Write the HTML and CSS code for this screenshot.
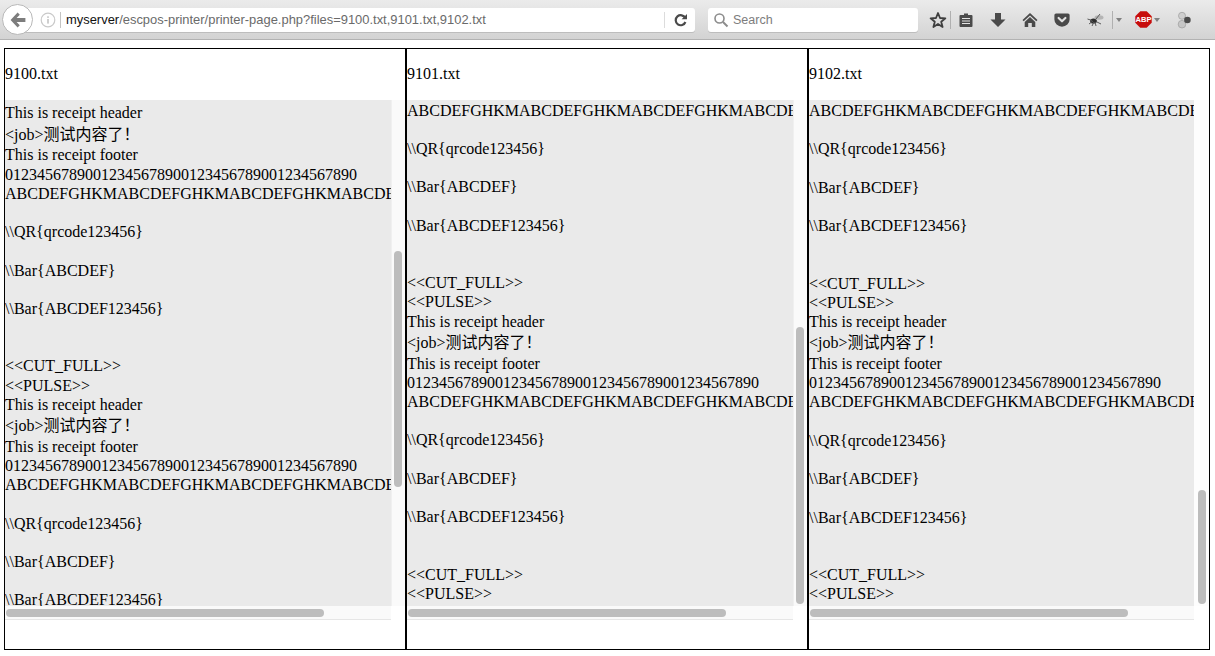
FILE: index.html
```html
<!DOCTYPE html>
<html lang="en">
<head>
<meta charset="utf-8">
<title>printer-page</title>
<link rel="stylesheet" href="styles.css">
</head>
<body>
<header class="toolbar">
  <div class="back"><svg viewBox="0 0 20 20" width="20" height="20"><path d="M9.6 2.6 L2.6 10 L9.6 17.4 L11.8 15.2 L8.6 12 H17.4 V8 H8.6 L11.8 4.8 Z" fill="#7d7d7d"/></svg></div>
  <div class="urlbar">
    <svg class="info" viewBox="0 0 16 16" width="16" height="16"><circle cx="8" cy="8" r="6.8" fill="none" stroke="#c9c9c9" stroke-width="1.2"/><rect x="7.2" y="7" width="1.6" height="4.6" fill="#c4c4c4"/><rect x="7.2" y="4.3" width="1.6" height="1.6" fill="#c4c4c4"/></svg>
    <span class="vsep"></span>
    <span class="url"><b>myserver</b>/escpos-printer/printer-page.php?files=9100.txt,9101.txt,9102.txt</span>
    <span class="vsep right"></span>
    <svg class="reload" viewBox="0 0 14 14" width="14" height="14"><path d="M11.2 5 A5 5 0 1 0 11.4 9" fill="none" stroke="#4a4a4a" stroke-width="2.2"/><path d="M7.6 6.2 H13 V1 Z" fill="#4a4a4a"/></svg>
  </div>
  <div class="search">
    <svg viewBox="0 0 16 16" width="16" height="16"><circle cx="6.5" cy="6.5" r="4.5" fill="none" stroke="#8c8c8c" stroke-width="1.6"/><path d="M10 10 L14.5 14.5" stroke="#8c8c8c" stroke-width="2"/></svg>
    <span>Search</span>
  </div>
  <div class="tools">
    <svg class="t-star" viewBox="0 0 18 18" width="18" height="18"><path d="M9 2 L11 7 L16.4 7.3 L12.2 10.7 L13.6 16 L9 13 L4.4 16 L5.8 10.7 L1.6 7.3 L7 7 Z" fill="none" stroke="#3f3f3f" stroke-width="1.8" stroke-linejoin="round"/></svg>
    <span class="tsep"></span>
    <svg class="t-clip" viewBox="0 0 16 16" width="16" height="16"><path d="M6 1.5 H10 V3 H13.5 A1 1 0 0 1 14.5 4 V14 A1 1 0 0 1 13.5 15 H2.5 A1 1 0 0 1 1.5 14 V4 A1 1 0 0 1 2.5 3 H6 Z" fill="#4a4a4a"/><path d="M4 6.5 H12 M4 9 H12 M4 11.5 H12" stroke="#e2e2e2" stroke-width="1.1"/></svg>
    <svg class="t-down" viewBox="0 0 16 16" width="16" height="16"><path d="M5 1 H11 V7.5 H15.5 L8 15 L0.5 7.5 H5 Z" fill="#4a4a4a"/></svg>
    <svg class="t-home" viewBox="0 0 16 16" width="16" height="16"><path d="M8 1 L15.5 8 L14.3 9.2 L8 3.4 L1.7 9.2 L0.5 8 Z" fill="#4a4a4a"/><path d="M8 5 L13.3 10 V15 H9.8 V11 H6.2 V15 H2.7 V10 Z" fill="#4a4a4a"/></svg>
    <svg class="t-pocket" viewBox="0 0 16 16" width="16" height="16"><path d="M2 1.5 H14 A1.6 1.6 0 0 1 15.6 3.1 V7.5 A7.6 7.2 0 0 1 0.4 7.5 V3.1 A1.6 1.6 0 0 1 2 1.5 Z" fill="#4a4a4a"/><path d="M4.6 6 L8 9.3 L11.4 6" fill="none" stroke="#e2e2e2" stroke-width="2.2" stroke-linecap="round" stroke-linejoin="round"/></svg>
    <svg class="t-bug" viewBox="0 0 20 16" width="20" height="16"><ellipse cx="7.5" cy="9" rx="3.4" ry="2.6" fill="#2e2e2e"/><ellipse cx="13" cy="5.5" rx="4.5" ry="2.2" fill="#b5b5b5"/><path d="M3 12 L7 9 M6 14 L8 10 M10 14 L9 10 M1.5 7 L6 8.5 M11 10 L15 12 M14 2 L10 7" stroke="#5a5a5a" stroke-width="1"/></svg>
    <span class="tsep bugsep"></span>
    <span class="caret c1"></span>
    <svg class="t-abp" viewBox="0 0 18 18" width="17" height="17"><path d="M5.6 0.3 H12.4 L17.7 5.6 V12.4 L12.4 17.7 H5.6 L0.3 12.4 V5.6 Z" fill="#c70d0c"/><text x="9" y="12" text-anchor="middle" class="abp-text">ABP</text></svg>
    <span class="caret c2"></span>
    <svg class="t-ext" viewBox="0 0 18 18" width="18" height="18"><circle cx="7" cy="13.2" r="3.8" fill="#c6c6c6" stroke="#a2a2a2" stroke-width="0.8"/><circle cx="7" cy="4.8" r="3.5" fill="#cfcfcf" stroke="#a2a2a2" stroke-width="0.8"/><circle cx="12.4" cy="9" r="3.3" fill="#4c4c4c"/></svg>
  </div>
</header>

<main class="columns">
  <section class="col">
    <div class="name">9100.txt</div>
    <div class="scroller">
      <div class="pane">
        <div class="lines first">
          <div class="ln">This is receipt header</div>
          <div class="ln job">&lt;job&gt;测试内容了！</div>
          <div class="ln">This is receipt footer</div>
          <div class="ln">01234567890012345678900123456789001234567890</div>
          <div class="ln">ABCDEFGHKMABCDEFGHKMABCDEFGHKMABCDEFGHKMABCDEFGHKM</div>
          <div class="ln"></div>
          <div class="ln">\\QR{qrcode123456}</div>
          <div class="ln"></div>
          <div class="ln">\\Bar{ABCDEF}</div>
          <div class="ln"></div>
          <div class="ln">\\Bar{ABCDEF123456}</div>
          <div class="ln"></div>
          <div class="ln"></div>
          <div class="ln">&lt;&lt;CUT_FULL&gt;&gt;</div>
          <div class="ln">&lt;&lt;PULSE&gt;&gt;</div>
          <div class="ln">This is receipt header</div>
          <div class="ln job">&lt;job&gt;测试内容了！</div>
          <div class="ln">This is receipt footer</div>
          <div class="ln">01234567890012345678900123456789001234567890</div>
          <div class="ln">ABCDEFGHKMABCDEFGHKMABCDEFGHKMABCDEFGHKMABCDEFGHKM</div>
          <div class="ln"></div>
          <div class="ln">\\QR{qrcode123456}</div>
          <div class="ln"></div>
          <div class="ln">\\Bar{ABCDEF}</div>
          <div class="ln"></div>
          <div class="ln">\\Bar{ABCDEF123456}</div>
        </div>
      </div>
      <div class="vtrack"><div class="vthumb" style="top:151px;height:236px"></div></div>
      <div class="htrack"><div class="hthumb"></div></div>
      <div class="corner"></div>
    </div>
  </section>

  <section class="col">
    <div class="name">9101.txt</div>
    <div class="scroller">
      <div class="pane">
        <div class="lines second">
          <div class="ln">ABCDEFGHKMABCDEFGHKMABCDEFGHKMABCDEFGHKMABCDEFGHKM</div>
          <div class="ln"></div>
          <div class="ln">\\QR{qrcode123456}</div>
          <div class="ln"></div>
          <div class="ln">\\Bar{ABCDEF}</div>
          <div class="ln"></div>
          <div class="ln">\\Bar{ABCDEF123456}</div>
          <div class="ln"></div>
          <div class="ln"></div>
          <div class="ln">&lt;&lt;CUT_FULL&gt;&gt;</div>
          <div class="ln">&lt;&lt;PULSE&gt;&gt;</div>
          <div class="ln">This is receipt header</div>
          <div class="ln job">&lt;job&gt;测试内容了！</div>
          <div class="ln">This is receipt footer</div>
          <div class="ln">01234567890012345678900123456789001234567890</div>
          <div class="ln">ABCDEFGHKMABCDEFGHKMABCDEFGHKMABCDEFGHKMABCDEFGHKM</div>
          <div class="ln"></div>
          <div class="ln">\\QR{qrcode123456}</div>
          <div class="ln"></div>
          <div class="ln">\\Bar{ABCDEF}</div>
          <div class="ln"></div>
          <div class="ln">\\Bar{ABCDEF123456}</div>
          <div class="ln"></div>
          <div class="ln"></div>
          <div class="ln">&lt;&lt;CUT_FULL&gt;&gt;</div>
          <div class="ln">&lt;&lt;PULSE&gt;&gt;</div>
        </div>
      </div>
      <div class="vtrack"><div class="vthumb" style="top:227px;height:277px"></div></div>
      <div class="htrack"><div class="hthumb"></div></div>
      <div class="corner"></div>
    </div>
  </section>

  <section class="col">
    <div class="name">9102.txt</div>
    <div class="scroller last">
      <div class="pane">
        <div class="lines third">
          <div class="ln">ABCDEFGHKMABCDEFGHKMABCDEFGHKMABCDEFGHKMABCDEFGHKM</div>
          <div class="ln"></div>
          <div class="ln">\\QR{qrcode123456}</div>
          <div class="ln"></div>
          <div class="ln">\\Bar{ABCDEF}</div>
          <div class="ln"></div>
          <div class="ln">\\Bar{ABCDEF123456}</div>
          <div class="ln"></div>
          <div class="ln"></div>
          <div class="ln">&lt;&lt;CUT_FULL&gt;&gt;</div>
          <div class="ln">&lt;&lt;PULSE&gt;&gt;</div>
          <div class="ln">This is receipt header</div>
          <div class="ln job">&lt;job&gt;测试内容了！</div>
          <div class="ln">This is receipt footer</div>
          <div class="ln">01234567890012345678900123456789001234567890</div>
          <div class="ln">ABCDEFGHKMABCDEFGHKMABCDEFGHKMABCDEFGHKMABCDEFGHKM</div>
          <div class="ln"></div>
          <div class="ln">\\QR{qrcode123456}</div>
          <div class="ln"></div>
          <div class="ln">\\Bar{ABCDEF}</div>
          <div class="ln"></div>
          <div class="ln">\\Bar{ABCDEF123456}</div>
          <div class="ln"></div>
          <div class="ln"></div>
          <div class="ln">&lt;&lt;CUT_FULL&gt;&gt;</div>
          <div class="ln">&lt;&lt;PULSE&gt;&gt;</div>
        </div>
      </div>
      <div class="vtrack"><div class="vthumb" style="top:390px;height:114px"></div></div>
      <div class="htrack"><div class="hthumb"></div></div>
      <div class="corner"></div>
    </div>
  </section>
</main>
</body>
</html>
```

FILE: styles.css
```css
* { box-sizing: border-box; }
html, body { margin: 0; padding: 0; background: #fff; overflow: hidden; }
body { width: 1215px; height: 656px; font-family: "Liberation Serif", "Noto Sans CJK SC", serif; font-size: 16px; color: #000; }

/* browser toolbar */
.toolbar {
  height: 40px;
  display: flex;
  align-items: center;
  position: relative;
  padding-left: 25px;
  background: linear-gradient(#ebebeb, #d3d3d3);
  border-bottom: 1px solid #b2b2b2;
  font-family: "Liberation Sans", sans-serif;
}
.back {
  position: absolute;
  left: 2px;
  top: 4px;
  width: 31px;
  height: 31px;
  border-radius: 50%;
  background: #fff;
  border: 1px solid #b8b8b8;
  display: flex;
  align-items: center;
  justify-content: center;
}
.urlbar {
  width: 670px;
  height: 24px;
  background: #fff;
  border-radius: 0 3px 3px 0;
  box-shadow: 0 1px 0 #bdbdbd;
  display: flex;
  align-items: center;
  padding-left: 15px;
}
.info { flex: none; }
.vsep { width: 1px; height: 16px; background: #c4c4c4; margin-left: 4px; flex: none; }
.vsep.right { margin-left: auto; background: #dcdcdc; }
.url { margin-left: 5px; font-size: 12.93px; color: #6a6a6a; white-space: nowrap; }
.url b { font-weight: 400; color: #111; }
.reload { margin: 0 7px 0 9px; flex: none; }
.search {
  width: 210px;
  height: 24px;
  margin-left: 13px;
  background: #fff;
  border-radius: 3px;
  box-shadow: 0 1px 0 #bdbdbd;
  display: flex;
  align-items: center;
  padding-left: 5px;
  font-size: 12.5px;
  color: #7d7d7d;
}
.search span { margin-left: 4px; }
.tools { display: flex; align-items: center; margin-left: 11px; flex: none; }
.tsep { width: 1px; height: 18px; background: #b0b0b0; margin-left: 3px; flex: none; }
.t-clip { margin-left: 7px; }
.t-down { margin-left: 16px; }
.t-home { margin-left: 16px; }
.t-pocket { margin-left: 16px; }
.t-bug { margin-left: 16px; }
.bugsep { margin-left: 6px; }
.caret { width: 0; height: 0; border-left: 3.5px solid transparent; border-right: 3.5px solid transparent; border-top: 4px solid #808080; flex: none; }
.c1 { margin-left: 3px; }
.t-abp { margin-left: 13px; }
.abp-text { font: 700 8px "Liberation Sans", sans-serif; fill: #fff; }
.c2 { margin-left: 2px; }
.t-ext { margin-left: 15px; }

/* page */
.columns { display: flex; margin: 8px 0 0 4px; width: 1206px; height: 602px; }
.col { width: 402px; border: 1px solid #000; display: flex; flex-direction: column; }
.name { height: 51px; line-height: 49px; }
.scroller {
  width: 400px;
  display: grid;
  grid-template-columns: 386px 14px;
  grid-template-rows: 506px 14px;
}
.scroller.last { grid-template-columns: 385px 15px; }
.pane { background: #eaeaea; overflow: hidden; }
.lines { white-space: nowrap; }
.first { padding-top: 3.4px; }
.second { padding-top: 0.6px; }
.third { padding-top: 1px; }
.ln { height: 19.2px; line-height: 19.2px; }
.ln.job { height: 22.8px; padding-top: 2px; line-height: 20.8px; }
.vtrack { position: relative; background: #fafafa; border-left: 1px solid #f0f0f0; }
.last .vtrack { background: #fdfdfd; border-left: 0; }
.last .vthumb { left: 4px; }
.vthumb { position: absolute; left: 2px; width: 8px; background: #bdbdbd; border-radius: 4px; }
.htrack { position: relative; background: #fafafa; border-bottom: 1px solid #e6e6e6; }
.hthumb { position: absolute; left: 1px; top: 3px; width: 318px; height: 8px; background: #bdbdbd; border-radius: 4px; }
.corner { background: #fff; }
```
